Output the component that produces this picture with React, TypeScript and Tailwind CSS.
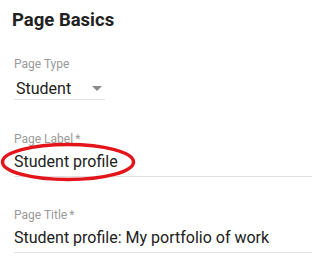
import React from 'react'

const font = { fontFamily: 'Roboto, "Liberation Sans", sans-serif' }

function Field({ label, value, children }: { label: string; value: string; children?: React.ReactNode }) {
    return (
        <div className="relative">
            <div className="text-[12px] leading-4 text-[#9a9a9a]">
                {label}
                <span className="ml-[2px]">*</span>
            </div>
            <div className="mt-[5px] pb-[4px] border-b border-[#e0e0e0] text-[16px] leading-5 text-[#212121]">
                {value}
            </div>
            {children}
        </div>
    )
}

export default function App() {
    return (
        <div className="w-[312px] h-[275px] bg-white overflow-hidden" style={font}>
            <h1 className="pl-3 pt-2 text-[18.5px] leading-6 font-bold text-[#212121]">Page Basics</h1>

            <div className="pl-[14px]">
                {/* 페이지 유형 */}
                <div className="mt-6">
                    <div className="text-[12px] leading-4 text-[#9a9a9a]">Page Type</div>
                    <div className="mt-[7px] w-[91px] flex items-center justify-between border-b border-[#e0e0e0] text-[16px] leading-5 text-[#212121]">
                        <span className="pl-[2px]">Student</span>
                        <svg width="10" height="5" viewBox="0 0 10 5" className="mr-[3px] -mt-[2px]">
                            <path d="M0 0h10L5 5z" fill="#8a8a8a" />
                        </svg>
                    </div>
                </div>

                <div className="mt-[31px]">
                    <Field label="Page Label" value="Student profile">
                        {/* 빨간 강조 표시 */}
                        <svg
                            width="140"
                            height="42"
                            viewBox="0 0 140 42"
                            className="absolute left-[-14px] top-[10px] pointer-events-none"
                        >
                            <ellipse cx="68" cy="21" rx="65.5" ry="17.5" fill="none" stroke="#e4141b" strokeWidth="3.5" />
                        </svg>
                    </Field>
                </div>

                <div className="mt-[30px]">
                    <Field label="Page Title" value="Student profile: My portfolio of work" />
                </div>
            </div>
        </div>
    )
}
